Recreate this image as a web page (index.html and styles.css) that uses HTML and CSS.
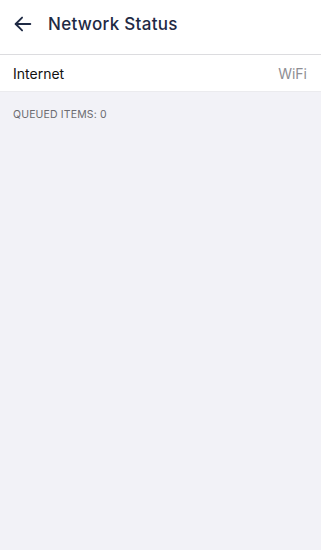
FILE: index.html
```html
<!DOCTYPE html>
<html>
<head>
<meta charset="utf-8">
<link rel="stylesheet" href="styles.css">
</head>
<body>
<div class="app">
  <header class="topbar">
    <button class="back" aria-label="Back">
      <svg width="22" height="22" viewBox="0 0 24 24" fill="none" stroke="#1f2a44" stroke-width="2" stroke-linecap="round" stroke-linejoin="round"><path d="M20 12H4"/><path d="M11 5l-7 7 7 7"/></svg>
    </button>
    <h1 class="title">Network Status</h1>
  </header>
  <div class="row">
    <span class="row-label">Internet</span>
    <span class="row-value">WiFi</span>
  </div>
  <div class="section-label">QUEUED ITEMS: 0</div>
</div>
</body>
</html>
```
FILE: styles.css
```css
html, body { margin: 0; padding: 0; height: 100%; }
body { background: #f2f2f7; font-family: Inter, "Liberation Sans", sans-serif; }
.app { min-height: 100%; }
.topbar {
  height: 48px;
  padding-bottom: 6px;
  background: #fff;
  border-bottom: 1px solid #dcdcdf;
  display: flex;
  align-items: center;
  box-sizing: content-box;
}
.back {
  background: none; border: 0; padding: 0;
  width: 22px; height: 22px;
  margin-left: 12px;
  display: flex; align-items: center; justify-content: center;
}
.title {
  margin: 0 0 0 14px;
  font-size: 17px;
  font-weight: 500;
  color: #1f2a44;
  letter-spacing: 0.3px;
}
.row {
  height: 36px;
  background: #fff;
  display: flex;
  align-items: center;
  justify-content: space-between;
  padding: 0 14px 0 13px;
  border-bottom: 1px solid #ebebee;
}
.row-label { font-size: 14px; color: #111; }
.row-value { font-size: 14px; color: #8e8e93; }
.section-label {
  padding: 16px 13px 0;
  font-size: 10.5px;
  color: #6b6b70;
  letter-spacing: 0.15px;
}
```
